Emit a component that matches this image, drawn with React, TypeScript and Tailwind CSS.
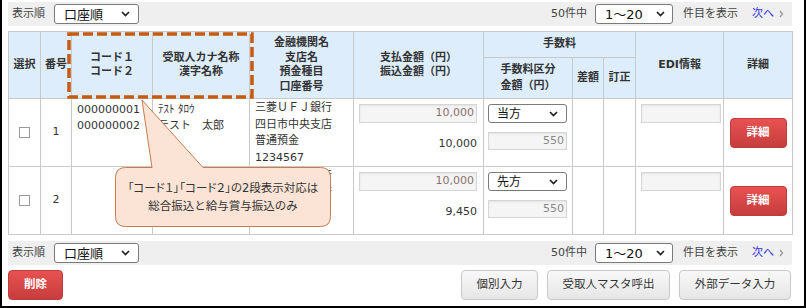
import React from "react";

// column widths, border to border
const colWidths = [32, 31, 81, 97, 104, 130, 89, 31, 32, 88, 69];

const bankLines = ["三菱ＵＦＪ銀行", "四日市中央支店", "普通預金", "1234567"];

const rows = [
  {
    no: 1,
    code1: "000000001",
    code2: "000000002",
    kana: "ﾃｽﾄ ﾀﾛｳ",
    kanji: "テスト　太郎",
    bank: bankLines,
    pay: "10,000",
    transfer: "10,000",
    fee: "当方",
    feeAmt: "550",
    h: "h-[67px]",
  },
  {
    // mostly hidden under the callout in the reference
    no: 2,
    code1: "",
    code2: "",
    kana: "",
    kanji: "",
    bank: bankLines.slice(0, 2),
    pay: "10,000",
    transfer: "9,450",
    fee: "先方",
    feeAmt: "550",
    h: "h-[68px]",
  },
];

const Chevron = () => (
  <svg width="9" height="6" viewBox="0 0 9 6" className="shrink-0">
    <path d="M1 1l3.5 3.5L8 1" fill="none" stroke="#222" strokeWidth="1.7" />
  </svg>
);

const FakeSelect = ({ value, className }: { value: string; className: string }) => (
  <div
    className={
      "flex items-center justify-between rounded-[3px] border border-[#7a7a7a] bg-white leading-none text-[#111] " +
      className
    }
  >
    <span>{value}</span>
    <Chevron />
  </div>
);

const PagerBar = () => (
  <div className="flex h-[24px] items-center justify-between bg-[#efefef] pl-[4px] pr-[8px] text-[11px] text-[#444]">
    <div className="flex items-center">
      <span>表示順</span>
      <FakeSelect value="口座順" className="ml-[9px] h-[20px] w-[85px] pl-[9px] pr-[8px] text-[13px]" />
    </div>
    <div className="flex items-center">
      <span>50件中</span>
      <FakeSelect value="1〜20" className="ml-[8px] h-[20px] w-[78px] pl-[9px] pr-[7px] text-[13px]" />
      <span className="ml-[10px]">件目を表示</span>
      <span className="ml-[14px] text-[#3030e0]">次へ</span>
      <svg width="5" height="8" viewBox="0 0 5 8" className="ml-[5px]">
        <path d="M1 1l2.5 3L1 7" fill="none" stroke="#999" strokeWidth="1.3" />
      </svg>
    </div>
  </div>
);

const ReadOnlyInput = ({ value, className }: { value: string; className: string }) => (
  <div
    className={
      "flex items-center justify-end border border-[#d6d6d6] bg-[#f5f5f5] pr-[2px] text-[11px] shadow-[inset_0_1px_2px_rgba(0,0,0,0.08)] " +
      className
    }
  >
    {value}
  </div>
);

const th = "border border-[#c9c9c9] bg-[#ddedfc] p-0 text-center align-middle font-bold text-[#333]";
const tdTop = "border border-[#c9c9c9] p-0 align-top";
const tdMid = "border border-[#c9c9c9] p-0 text-center align-middle";

const GrayButton = ({ label, w }: { label: string; w: string }) => (
  <button
    className={
      "h-[30px] rounded-[4px] border border-[#c8c8c8] bg-linear-to-b from-[#f8f8f8] to-[#e6e6e6] text-[11.5px] text-[#333] " +
      w
    }
  >
    {label}
  </button>
);

const RedButton = ({ label, w }: { label: string; w: string }) => (
  <button
    className={
      "h-[30px] rounded-[4px] border border-[#c03b3b] bg-linear-to-b from-[#e85252] to-[#c63d3d] text-[11.5px] font-bold text-white " +
      w
    }
  >
    {label}
  </button>
);

const App = () => {
  return (
    <div className="relative h-[308px] w-[806px] bg-white font-['DejaVu_Sans','Noto_Sans_CJK_JP',sans-serif] text-[11px] text-[#333]">
      <div className="h-full border-b-2 border-l-2 border-r-2 border-black pl-[6px] pt-[2px]">
        <div className="w-[784px]">
          <PagerBar />

          <table className="mt-[5px] w-[784px] table-fixed border-collapse">
            <colgroup>
              {colWidths.map((w, i) => (
                <col key={i} style={{ width: w }} />
              ))}
            </colgroup>
            <thead className="leading-[14.5px]">
              <tr className="h-[26px]">
                <th rowSpan={2} className={th}>選択</th>
                <th rowSpan={2} className={th}>番号</th>
                <th rowSpan={2} className={th}>
                  コード１
                  <br />
                  コード２
                </th>
                <th rowSpan={2} className={th}>
                  受取人カナ名称
                  <br />
                  漢字名称
                </th>
                <th rowSpan={2} className={th}>
                  金融機関名
                  <br />
                  支店名
                  <br />
                  預金種目
                  <br />
                  口座番号
                </th>
                <th rowSpan={2} className={th}>
                  支払金額（円）
                  <br />
                  振込金額（円）
                </th>
                <th colSpan={3} className={th}>手数料</th>
                <th rowSpan={2} className={th}>EDI情報</th>
                <th rowSpan={2} className={th}>詳細</th>
              </tr>
              <tr className="h-[41px]">
                <th className={th}>
                  <div className="leading-[16px]">
                    手数料区分
                    <br />
                    金額（円）
                  </div>
                </th>
                <th className={th}>差額</th>
                <th className={th}>訂正</th>
              </tr>
            </thead>
            <tbody>
              {rows.map((r) => (
                <tr key={r.no} className={r.h}>
                  <td className={tdMid}>
                    <div className="mx-auto h-[11px] w-[11px] border border-[#999] bg-white" />
                  </td>
                  <td className={tdMid}>{r.no}</td>
                  <td className={tdTop}>
                    <div className="pl-[5px] pt-[3px] leading-[16px]">
                      <div>{r.code1}</div>
                      <div>{r.code2}</div>
                    </div>
                  </td>
                  <td className={tdTop}>
                    <div className="pl-[5px] pt-[3px] leading-[16px]">
                      <div>{r.kana}</div>
                      <div>{r.kanji}</div>
                    </div>
                  </td>
                  <td className={tdTop}>
                    <div className="pl-[5px] pt-[1px] leading-[16.5px]">
                      {r.bank.map((l) => (
                        <div key={l}>{l}</div>
                      ))}
                    </div>
                  </td>
                  <td className={tdTop}>
                    <div className="pl-[5px] pr-[6px] pt-[5px]">
                      <ReadOnlyInput value={r.pay} className="h-[19px] w-full text-[#8c7070]" />
                      <div className="mt-[13px] text-right leading-[16px]">{r.transfer}</div>
                    </div>
                  </td>
                  <td className={tdTop}>
                    <div className="pl-[4px] pt-[5px]">
                      <FakeSelect value={r.fee} className="h-[19px] w-[79px] pl-[8px] pr-[8px] text-[12px]" />
                      <ReadOnlyInput value={r.feeAmt} className="mt-[9px] h-[18px] w-[79px] text-[#888]" />
                    </div>
                  </td>
                  <td className={tdTop} />
                  <td className={tdTop} />
                  <td className={tdTop}>
                    <div className="pl-[5px] pt-[5px]">
                      <ReadOnlyInput value="" className="h-[19px] w-[80px]" />
                    </div>
                  </td>
                  <td className={tdMid}>
                    <RedButton label="詳細" w="w-[57px]" />
                  </td>
                </tr>
              ))}
            </tbody>
          </table>

          <div className="mt-[6px]">
            <PagerBar />
          </div>

          <div className="mt-[5px] flex items-start justify-between">
            <RedButton label="削除" w="w-[55px]" />
            <div className="flex gap-[9px] pr-[1px]">
              <GrayButton label="個別入力" w="w-[77px]" />
              <GrayButton label="受取人マスタ呼出" w="w-[123px]" />
              <GrayButton label="外部データ入力" w="w-[112px]" />
            </div>
          </div>
        </div>
      </div>

      {/* annotation overlay: dashed frame + callout */}
      <svg width="806" height="308" className="pointer-events-none absolute left-0 top-0">
        <rect x="69" y="34" width="183" height="63" fill="none" stroke="#c55a11" strokeWidth="3.5" strokeDasharray="10 4" />
        <path
          d="M125.5 167.5 L152 167.5 L142 100 L203 167.5 L320.5 167.5 Q330.5 167.5 330.5 177.5 L330.5 216.5 Q330.5 226.5 320.5 226.5 L125.5 226.5 Q115.5 226.5 115.5 216.5 L115.5 177.5 Q115.5 167.5 125.5 167.5 Z"
          fill="#fbe4d5"
          stroke="#c67c4e"
          strokeWidth="1"
        />
      </svg>
      <div className="absolute left-[115px] top-[167px] flex h-[60px] w-[216px] flex-col items-center justify-center text-[11.5px] leading-[18px] text-[#333]">
        <div className="[font-feature-settings:'palt']">「コード１」「コード２」の2段表示対応は</div>
        <div>総合振込と給与賞与振込のみ</div>
      </div>
    </div>
  );
};

export default App;
